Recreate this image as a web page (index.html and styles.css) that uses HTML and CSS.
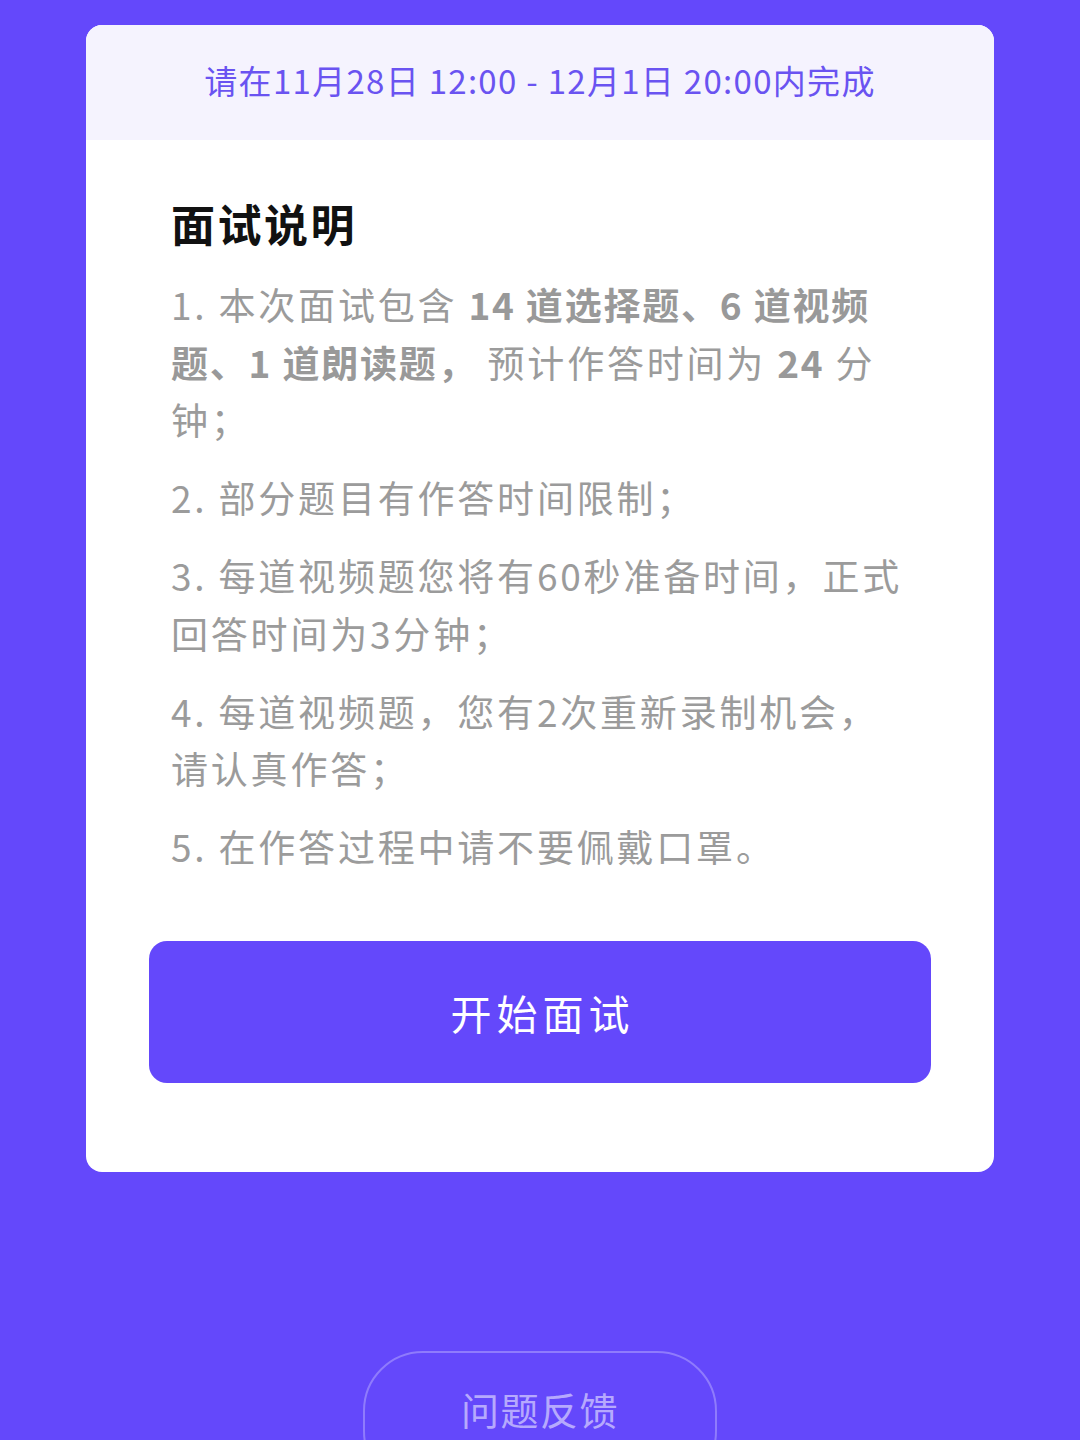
FILE: index.html
```html
<!DOCTYPE html>
<html lang="zh-CN">
<head>
<meta charset="utf-8">
<title>面试说明</title>
<link rel="stylesheet" href="styles.css">
</head>
<body>
<div class="page">
  <div class="card">
    <div class="card-head">请在11月28日 12:00 - 12月1日 20:00内完成</div>
    <div class="card-body">
      <div class="intro">
        <h1 class="title">面试说明</h1>
        <ol class="rules">
          <li>1. 本次面试包含 <b>14 道选择题、6 道视频<br>题、1 道朗读题，</b> 预计作答时间为 <b>24</b> 分<br>钟；</li>
          <li>2. 部分题目有作答时间限制；</li>
          <li>3. 每道视频题您将有60秒准备时间，正式<br>回答时间为3分钟；</li>
          <li>4. 每道视频题，您有2次重新录制机会，<br>请认真作答；</li>
          <li>5. 在作答过程中请不要佩戴口罩。</li>
        </ol>
      </div>
      <button class="start-btn">开始面试</button>
    </div>
  </div>
  <button class="feedback-btn">问题反馈</button>
</div>
</body>
</html>
```

FILE: styles.css
```css
html, body {
  margin: 0;
  padding: 0;
}
body {
  background: #6448fb;
  font-family: "PingFang SC", "Noto Sans CJK SC", "Noto Sans", sans-serif;
  width: 1080px;
  height: 1440px;
  overflow: hidden;
}
.page {
  display: flex;
  flex-direction: column;
  align-items: center;
  padding-top: 25px;
}
.card {
  width: 908px;
  background: #ffffff;
  border-radius: 16px;
  overflow: hidden;
}
.card-head {
  height: 115px;
  box-sizing: border-box;
  padding-bottom: 6px;
  background: #f5f3fe;
  color: #6a53f1;
  font-size: 33px;
  display: flex;
  align-items: center;
  justify-content: center;
  letter-spacing: 1.3px;
}
.card-body {
  padding: 53px 63px 89px;
}
.intro {
  padding: 0 22px;
}
.title {
  margin: 0;
  font-size: 44px;
  line-height: 60px;
  font-weight: 700;
  color: #111111;
  letter-spacing: 2.5px;
}
.rules {
  list-style: none;
  margin: 23px 0 0;
  padding: 0;
  display: flex;
  flex-direction: column;
  gap: 20.5px;
  font-size: 37px;
  line-height: 57.5px;
  color: #9b9b9b;
  letter-spacing: 2.8px;
  white-space: nowrap;
}
.rules li {
  margin: 0;
}
.rules b {
  font-weight: 700;
  color: #999999;
  letter-spacing: 1.8px;
}
.start-btn {
  display: block;
  width: 100%;
  height: 142px;
  margin-top: 65px;
  border: none;
  border-radius: 18px;
  background: #6448fb;
  color: #ffffff;
  font-family: inherit;
  font-size: 41px;
  letter-spacing: 5px;
  padding: 0 0 0 5px;
}
.feedback-btn {
  margin-top: 179px;
  width: 354px;
  height: 140px;
  border: 2px solid rgba(255, 255, 255, 0.28);
  border-radius: 60px;
  background: transparent;
  color: rgba(255, 255, 255, 0.55);
  font-family: inherit;
  font-size: 38px;
  letter-spacing: 1.5px;
  padding: 26px 0 0;
  line-height: 60px;
  display: flex;
  align-items: flex-start;
  justify-content: center;
  box-sizing: border-box;
}
```
